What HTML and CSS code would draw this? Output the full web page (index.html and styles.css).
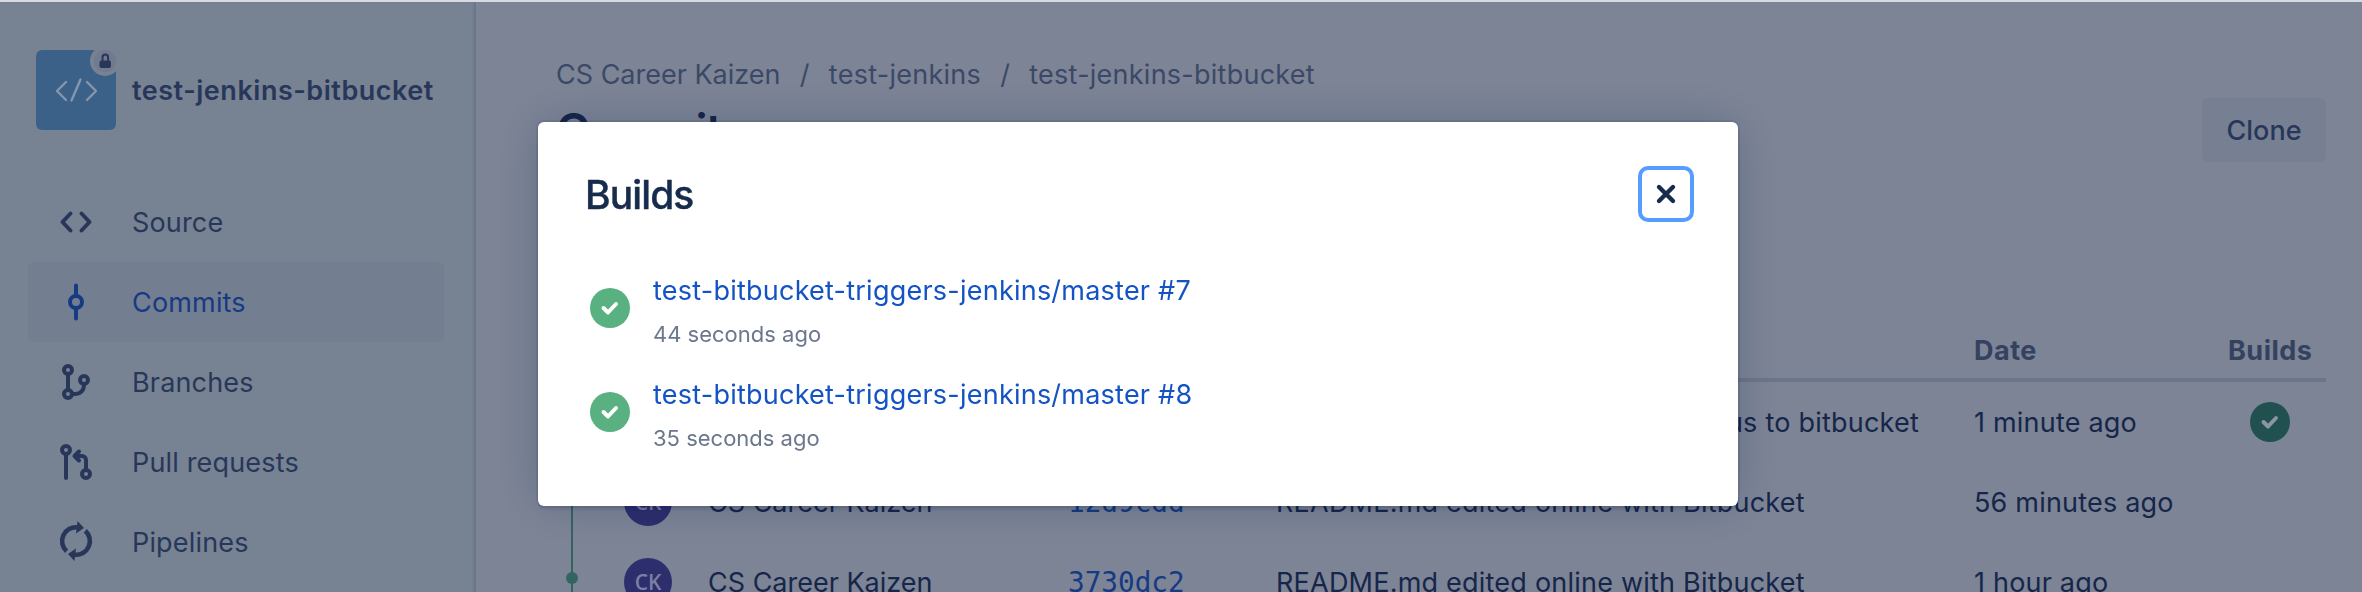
FILE: index.html
```html
<!DOCTYPE html>
<html lang="en">
<head>
<meta charset="utf-8">
<title>Commits</title>
<link rel="stylesheet" href="styles.css">
</head>
<body>
<div class="topline"></div>
<div class="app">
  <aside class="sidebar">
    <div class="repo">
      <svg class="repo-icon" viewBox="0 0 80 80">
        <defs><clipPath id="tile"><rect width="80" height="80" rx="6"/></clipPath><clipPath id="square"><rect width="80" height="80"/></clipPath></defs>
        <g clip-path="url(#tile)">
          <rect width="80" height="80" fill="#3b6188"/>
          <path d="M30 32l-9 9 9 9M44.500 29.500l-9 21M51 32l9 9-9 9" fill="none" stroke="#8795ab" stroke-width="2.400" stroke-linecap="round" stroke-linejoin="round"/>
        </g>
        <g clip-path="url(#square)">
          <path d="M58 0H80V22Z" fill="#778293"/>
          <circle cx="69" cy="11" r="15" fill="#778293"/>
          <circle cx="69" cy="11" r="11" fill="#717a90"/>
        </g>
        <rect x="63.500" y="10.500" width="11.500" height="7.500" rx="2" fill="#283759"/>
        <path d="M66.500 11V7.500a2.800 3 0 0 1 5.600 0V11" fill="none" stroke="#283759" stroke-width="2"/>
      </svg>
      <span class="repo-name">test-jenkins-bitbucket</span>
    </div>
    <nav class="nav">
      <a class="nav-item"><svg class="nav-icon" viewBox="0 0 48 48"><path d="M18.500 15.500l-8 8.500 8 8.500M29.500 15.500l8 8.500-8 8.500" stroke-linejoin="round" stroke-linecap="round"/></svg><span>Source</span></a>
      <a class="nav-item active"><svg class="nav-icon" viewBox="0 0 48 48"><circle cx="24" cy="24" r="6"/><path d="M24 7.500V18M24 30v10.500" stroke-linecap="round"/></svg><span>Commits</span></a>
      <a class="nav-item"><svg class="nav-icon" viewBox="0 0 48 48"><circle cx="16" cy="12" r="4"/><circle cx="32" cy="22" r="4"/><circle cx="16" cy="36" r="4"/><path d="M16 16v16M32 26v1.500a8.500 8.500 0 0 1-8.500 8.500H20"/></svg><span>Branches</span></a>
      <a class="nav-item"><svg class="nav-icon" viewBox="0 0 48 48"><circle cx="14" cy="12" r="4"/><circle cx="34" cy="36" r="4"/><path d="M14 16v24M27 13.500L22.500 18l4.500 4.500M23.500 18H30a4 4 0 0 1 4 4v10" stroke-linecap="round" stroke-linejoin="round"/></svg><span>Pull requests</span></a>
      <a class="nav-item"><svg class="nav-icon" viewBox="0 0 48 48"><path class="arc" d="M14.700 33.300A13.800 13.800 0 0 1 25.400 9.300M33.300 12.700A13.800 13.800 0 0 1 22.600 36.700"/><path class="tip" d="M25.500 3l6.500 7-8 5.500zM22.500 43l-6.500-7 8-5.500z"/></svg><span>Pipelines</span></a>
    </nav>
  </aside>
  <main class="main">
    <div class="crumbs"><span>CS Career Kaizen</span><span class="sep">/</span><span class="slug">test-jenkins</span><span class="sep">/</span><span class="slug">test-jenkins-bitbucket</span></div>
    <header class="page-head"><h1>Commits</h1><button class="clone">Clone</button></header>
    <section class="table">
      <div class="row head"><span></span><span></span><span></span><span></span><span>Date</span><span>Builds</span></div>
      <div class="row">
        <span class="graph"><i class="dot"></i></span>
        <span></span>
        <span></span>
        <span class="msg end">us to bitbucket</span>
        <span class="date">1 minute ago</span>
        <svg class="status dim" viewBox="0 0 40 40"><circle cx="20" cy="20" r="20"/><path d="M13.500 20l4.500 4.500 8-8.500"/></svg>
      </div>
      <div class="row">
        <span class="graph"><i class="dot"></i></span>
        <span class="author"><b class="avatar">CK</b><span>CS Career Kaizen</span></span>
        <span class="hash">12d9cdd</span>
        <span class="msg">README.md edited online with Bitbucket</span>
        <span class="date">56 minutes ago</span>
      </div>
      <div class="row">
        <span class="graph"><i class="dot"></i></span>
        <span class="author"><b class="avatar">CK</b><span>CS Career Kaizen</span></span>
        <span class="hash">3730dc2</span>
        <span class="msg">README.md edited online with Bitbucket</span>
        <span class="date">1 hour ago</span>
      </div>
    </section>
  </main>
</div>
<div class="modal" role="dialog">
  <header class="modal-head"><h2>Builds</h2><button class="close"><svg viewBox="0 0 48 48"><path d="M17 17l14 14M31 17L17 31"/></svg></button></header>
  <ul class="builds">
    <li class="build"><svg class="status" viewBox="0 0 40 40"><circle cx="20" cy="20" r="20"/><path d="M13.500 20l4.500 4.500 8-8.500"/></svg><div><a class="link">test-bitbucket-triggers-jenkins/master #7</a><p class="ago">44 seconds ago</p></div></li>
    <li class="build"><svg class="status" viewBox="0 0 40 40"><circle cx="20" cy="20" r="20"/><path d="M13.500 20l4.500 4.500 8-8.500"/></svg><div><a class="link">test-bitbucket-triggers-jenkins/master #8</a><p class="ago">35 seconds ago</p></div></li>
  </ul>
</div>
</body>
</html>
```
FILE: styles.css
```css
* { box-sizing: border-box; margin: 0; padding: 0; }
body { width: 2362px; height: 592px; overflow: hidden; background: #7c8496; font: 27px "Inter", sans-serif; color: #162649; display: flex; flex-direction: column; }
button { font: inherit; border: 0; background: none; color: inherit; }
.topline { height: 2px; background: #d8dae2; flex: none; }
.app { display: flex; height: 590px; overflow: hidden; }

.sidebar { width: 476px; flex: none; background: #778293; border-right: 2px solid #6b778a; box-shadow: inset -2px 0 2px -1px #707b8e; padding: 48px 28px 0; color: #283759; }
.repo { display: flex; align-items: center; gap: 16px; padding-left: 8px; height: 80px; }
.repo-icon { width: 80px; height: 80px; flex: none; }
.repo-name { font-weight: 600; white-space: nowrap; letter-spacing: .52px; }
.nav { margin-top: 52px; }
.nav-item { display: flex; align-items: center; height: 80px; width: 416px; padding-left: 24px; gap: 32px; border-radius: 6px; letter-spacing: .17px; }
.nav-item.active { background: #737e91; color: #163a83; }
.nav-icon { width: 48px; height: 48px; fill: none; stroke: currentColor; stroke-width: 4; }
.nav-icon .arc { stroke-width: 4.6; }
.nav-icon .tip { fill: currentColor; stroke: none; }

.main { flex: 1; padding: 52px 36px 0 80px; }
.crumbs { display: flex; align-items: center; height: 40px; color: #3b4966; white-space: nowrap; }
.sep { margin: 0 19.3px; }
.slug { letter-spacing: .25px; }
.page-head { display: flex; justify-content: space-between; align-items: center; height: 64px; margin-top: 4px; }
h1 { font-size: 46px; font-weight: 600; color: #162649; letter-spacing: -1.3px; }
.clone { width: 124px; height: 64px; border-radius: 6px; background: #768092; color: #283759; font-weight: 500; }

.table { margin-top: 160px; }
.row { display: grid; grid-template-columns: 68px 446px 206px 698px 254px 98px; align-items: center; height: 80px; white-space: nowrap; }
.row > *, .author > * { justify-self: start; }
.row.head { height: 60px; border-bottom: 4px solid #6c768b; color: #34425f; font-weight: 700; letter-spacing: .5px; }
.graph { display: flex; align-items: center; height: 80px; width: 2px; margin-left: 15px; background: #326460; }
.dot { width: 12px; height: 12px; border-radius: 50%; background: #326460; flex: none; margin: -8px -5px 0; }
.author { display: flex; align-items: center; gap: 36px; }
.avatar { width: 48px; height: 48px; border-radius: 50%; background: #2d2e6e; color: #7b80a0; font: 600 21px "Open Sans", sans-serif; display: grid; place-items: center; }
.hash { font: 27.7px "DejaVu Sans Mono", monospace; color: #163a83; margin-left: -2px; }
.msg { letter-spacing: .22px; }
.msg.end { width: 643px; text-align: right; }
.date { letter-spacing: .2px; }
.status { width: 40px; height: 40px; fill: #59b081; flex: none; }
.status path { fill: none; stroke: #fff; stroke-width: 4; stroke-linecap: round; stroke-linejoin: round; }
.status.dim { fill: #205050; margin-left: 22px; }
.status.dim path { stroke: #8a96a4; }

.modal { position: fixed; left: 538px; top: 122px; width: 1200px; height: 384px; background: #fff; border-radius: 6px; padding: 44px 44px 0 47px; box-shadow: 0 0 0 2px rgba(9,30,66,.08), 0 4px 2px rgba(9,30,66,.08), 0 0 40px -8px rgba(9,30,66,.31); }
.modal-head { display: flex; align-items: center; justify-content: space-between; height: 56px; }
h2 { font-size: 39px; font-weight: 500; color: #172b4d; letter-spacing: -.9px; -webkit-text-stroke: .4px; }
.close { width: 56px; height: 56px; border: 4px solid #579dff; border-radius: 10px; color: #172b4d; }
.close svg { display: block; width: 48px; height: 48px; fill: none; stroke: currentColor; stroke-width: 4.4; stroke-linecap: round; }
.builds { list-style: none; margin-top: 45px; }
.build { display: flex; align-items: flex-start; gap: 23px; height: 104px; padding-left: 5px; white-space: nowrap; }
.build .status { margin-top: 21px; }
.link { display: block; width: max-content; line-height: 48px; color: #1453c4; letter-spacing: .23px; }
.ago { width: max-content; font-size: 22px; line-height: 38px; color: #6b778c; }
```
